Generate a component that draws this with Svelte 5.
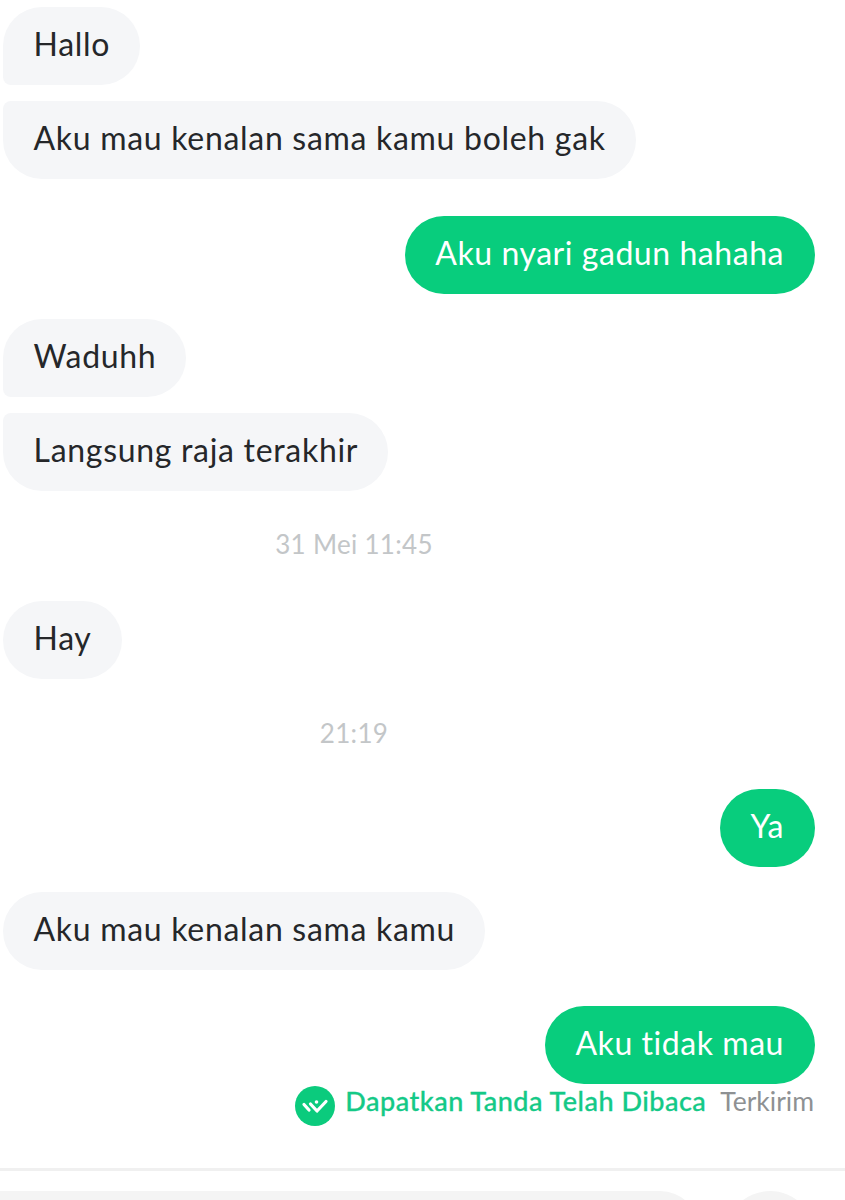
<script>
  const rows = [
    { kind: 'in', text: 'Hallo', shape: 'first', mt: 0 },
    { kind: 'in', text: 'Aku mau kenalan sama kamu boleh gak', shape: 'last', mt: 16 },
    { kind: 'out', text: 'Aku nyari gadun hahaha', mt: 37 },
    { kind: 'in', text: 'Waduhh', shape: 'first', mt: 25 },
    { kind: 'in', text: 'Langsung raja terakhir', shape: 'last', mt: 16 },
    { kind: 'time', text: '31 Mei 11:45', mt: 38 },
    { kind: 'in', text: 'Hay', mt: 42 },
    { kind: 'time', text: '21:19', mt: 39 },
    { kind: 'out', text: 'Ya', mt: 41 },
    { kind: 'in', text: 'Aku mau kenalan sama kamu', mt: 25 },
    { kind: 'out', text: 'Aku tidak mau', mt: 36 }
  ];
</script>

<div class="screen">
  <div class="thread">
    {#each rows as r}
      {#if r.kind === 'time'}
        <div class="time" style="margin-top:{r.mt}px">{r.text}</div>
      {:else}
        <div class="row {r.kind}" style="margin-top:{r.mt}px">
          <div class="bubble {r.shape ?? ''}">{r.text}</div>
        </div>
      {/if}
    {/each}
    <div class="status">
      <svg class="badge" width="40" height="40" viewBox="0 0 40 40" aria-hidden="true">
        <circle cx="20" cy="20" r="20" fill="#0bcb7d" />
        <path d="M9 18.5l5 5.5M15.5 18l6.5 7 9-9.5" fill="none" stroke="#fff" stroke-width="3.2" stroke-linecap="round" stroke-linejoin="round" />
        <circle cx="21.5" cy="16" r="1.8" fill="#fff" />
      </svg>
      <span class="cta">Dapatkan Tanda Telah Dibaca</span>
      <span class="sent">Terkirim</span>
    </div>
  </div>
  <div class="divider"></div>
  <div class="composer">
    <div class="field"></div>
    <div class="round"></div>
  </div>
</div>

<style>
  :global(body) {
    margin: 0;
    background: #fff;
  }
  .screen {
    width: 845px;
    height: 1200px;
    overflow: hidden;
    background: #fff;
    font-family: Lato, "Noto Sans", sans-serif;
  }
  .thread {
    padding: 7px 30px 0 3px;
    height: 1168px;
    box-sizing: border-box;
  }
  .row {
    display: flex;
  }
  .row.out {
    justify-content: flex-end;
  }
  .bubble {
    height: 78px;
    box-sizing: border-box;
    padding: 0 30px 5px 30.5px;
    display: flex;
    align-items: center;
    border-radius: 39px;
    font-size: 32px;
    font-weight: 400;
    letter-spacing: 0.7px;
    white-space: nowrap;
  }
  .in .bubble {
    background: #f5f6f8;
    color: #25272a;
  }
  .in .bubble.first {
    border-bottom-left-radius: 8px;
  }
  .in .bubble.last {
    border-top-left-radius: 8px;
  }
  .out .bubble {
    background: #08cd7d;
    color: #fff;
    letter-spacing: 0.55px;
    padding-right: 31px;
  }
  .time {
    height: 30px;
    line-height: 30px;
    text-align: center;
    font-size: 26px;
    color: #c3c6c8;
    padding-right: 110px;
    letter-spacing: 0.3px;
  }
  .status {
    display: flex;
    justify-content: flex-end;
    align-items: flex-start;
    margin-right: 1px;
    height: 44px;
  }
  .badge {
    margin-top: 2px;
    margin-right: 10px;
  }
  .cta {
    color: #14c987;
    font-size: 27px;
    font-weight: 500;
    letter-spacing: 0.5px;
    -webkit-text-stroke: 0.3px #14c987;
    line-height: 34px;
  }
  .sent {
    color: #8e9193;
    font-size: 26.5px;
    line-height: 34px;
    margin-left: 14px;
  }
  .divider {
    height: 3px;
    background: #f0f0f0;
  }
  .composer {
    display: flex;
    gap: 26px;
    margin-top: 20px;
    padding-right: 30px;
  }
  .field {
    flex: 1;
    height: 78px;
    background: #f4f4f4;
    border-radius: 0 39px 39px 0;
  }
  .round {
    width: 90px;
    height: 90px;
    border-radius: 50%;
    background: #f4f4f4;
  }
</style>
